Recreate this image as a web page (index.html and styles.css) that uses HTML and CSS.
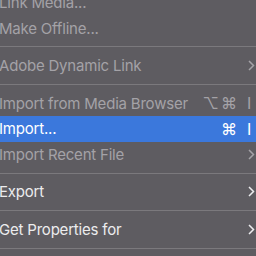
FILE: index.html
```html
<!DOCTYPE html>
<html>
<head>
<meta charset="utf-8">
<link rel="stylesheet" href="styles.css">
</head>
<body>
<div class="menu">
  <div class="item disabled"><span class="label">Link Media...</span></div>
  <div class="item disabled"><span class="label">Make Offline...</span></div>
  <div class="sep"></div>
  <div class="item disabled"><span class="label">Adobe Dynamic Link</span>
    <svg class="chev" width="7" height="11" viewBox="0 0 7 11"><path d="M1 1 L5.5 5.5 L1 10" fill="none" stroke="currentColor" stroke-width="1.5"/></svg></div>
  <div class="sep"></div>
  <div class="item disabled"><span class="label">Import from Media Browser</span><span class="keys"><span class="k">⌥⌘</span><span class="kl">I</span></span></div>
  <div class="item active"><span class="label">Import...</span><span class="keys"><span class="k">⌘</span><span class="kl">I</span></span></div>
  <div class="item disabled"><span class="label">Import Recent File</span>
    <svg class="chev" width="7" height="11" viewBox="0 0 7 11"><path d="M1 1 L5.5 5.5 L1 10" fill="none" stroke="currentColor" stroke-width="1.5"/></svg></div>
  <div class="sep"></div>
  <div class="item"><span class="label">Export</span>
    <svg class="chev" width="7" height="11" viewBox="0 0 7 11"><path d="M1 1 L5.5 5.5 L1 10" fill="none" stroke="currentColor" stroke-width="1.5"/></svg></div>
  <div class="sep"></div>
  <div class="item"><span class="label">Get Properties for</span>
    <svg class="chev" width="7" height="11" viewBox="0 0 7 11"><path d="M1 1 L5.5 5.5 L1 10" fill="none" stroke="currentColor" stroke-width="1.5"/></svg></div>
  <div class="sep"></div>
</div>
</body>
</html>
```
FILE: styles.css
```css
html, body {
  margin: 0;
  padding: 0;
  width: 256px;
  height: 256px;
  overflow: hidden;
  background: #5e5c61;
}
.menu {
  margin-top: -10px;
  display: flex;
  flex-direction: column;
  font-family: Inter, "Liberation Sans", sans-serif;
  font-size: 15px;
  letter-spacing: -0.2px;
  color: #ececee;
}
.item {
  height: 25.4px;
  display: flex;
  align-items: center;
  justify-content: space-between;
  padding: 0 1px 0 0;
  margin-left: -1px;
}
.item.disabled {
  color: #a4a2a7;
}
.item.active {
  background: #3b78dc;
  color: #ffffff;
}
.sep {
  height: 12.3px;
  display: flex;
  align-items: center;
}
.sep::before {
  content: "";
  display: block;
  width: 100%;
  height: 1px;
  background: #7b797d;
}
.keys {
  display: flex;
  align-items: center;
  gap: 8px;
  margin-right: 4px;
  font-size: 16px;
}
.k {
  letter-spacing: 2px;
}
.chev {
  display: block;
}
```
